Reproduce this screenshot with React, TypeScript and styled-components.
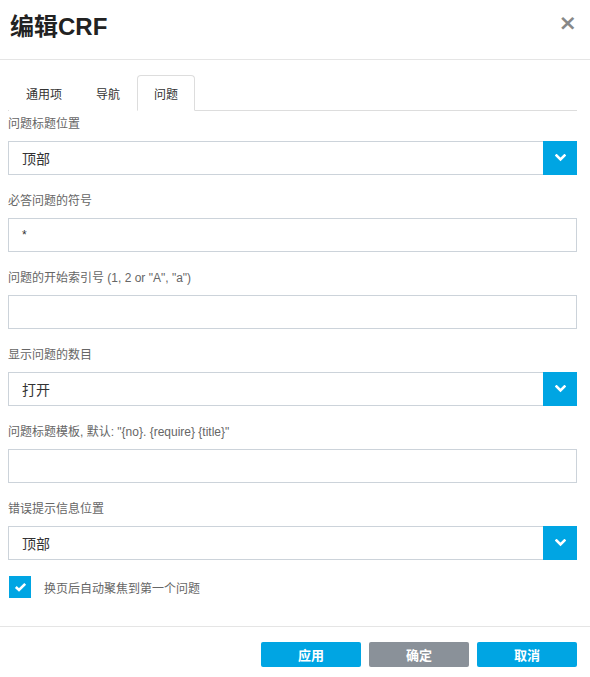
import React from "react";
import styled, { createGlobalStyle } from "styled-components";

const Global = createGlobalStyle`
  html, body { margin: 0; padding: 0; background: #fff; }
  body { font-family: "Helvetica Neue", "Liberation Sans", Arial, "Noto Sans CJK SC", sans-serif; }
  * { box-sizing: border-box; }
`;

const Dialog = styled.div`
  width: 590px;
  height: 677px;
  display: flex;
  flex-direction: column;
  background: #fff;
`;

const Header = styled.div`
  height: 60px;
  border-bottom: 1px solid #e5e5e5;
  display: flex;
  align-items: center;
  justify-content: space-between;
  padding: 0 13px 0 10px;
`;

const Title = styled.h1`
  margin: 0;
  font-size: 24px;
  font-weight: 600;
  color: #222;
  line-height: 1;
  padding-bottom: 6px;
`;

const Close = styled.button`
  border: 0;
  background: none;
  padding: 0;
  color: #888;
  font-size: 22px;
  font-weight: 700;
  line-height: 1;
  cursor: pointer;
  margin-bottom: 14px;
  font-family: "DejaVu Sans", sans-serif;
`;

const Body = styled.div`
  flex: 1;
  padding: 15px 13px 0 8px;
  display: flex;
  flex-direction: column;
`;

const TabBar = styled.div`
  display: flex;
  height: 36px;
  border-bottom: 1px solid #ddd;
  padding-left: 1px;
`;

const Tab = styled.div<{ $active?: boolean }>`
  height: 36px;
  padding: 0 16px;
  display: flex;
  align-items: center;
  justify-content: center;
  font-size: 12px;
  color: #333;
  white-space: nowrap;
  border: 1px solid ${(p) => (p.$active ? "#ddd" : "transparent")};
  border-bottom-color: ${(p) => (p.$active ? "#fff" : "transparent")};
  border-radius: 4px 4px 0 0;
  background: #fff;
  margin-bottom: -1px;
`;

const Field = styled.div`
  display: flex;
  flex-direction: column;
  margin-top: 5px;
  & + & {
    margin-top: 18px;
  }
`;

const Label = styled.label`
  font-size: 12px;
  color: #666;
  line-height: 17px;
  margin-bottom: 8px;
`;

const Box = styled.div`
  height: 34px;
  border: 1px solid #ccd3da;
  display: flex;
  align-items: center;
  background: #fff;
`;

const Value = styled.span<{ $small?: boolean }>`
  flex: 1;
  padding-left: 13px;
  font-size: ${(p) => (p.$small ? "12px" : "14px")};
  color: #333;
`;

const Arrow = styled.span`
  width: 34px;
  height: 34px;
  margin: -1px -1px -1px 0;
  background: #00a5e3;
  display: flex;
  align-items: center;
  justify-content: center;
`;

const CheckRow = styled.div`
  display: flex;
  align-items: center;
  margin-top: 16px;
  padding-left: 1px;
`;

const CheckBox = styled.span`
  width: 22px;
  height: 22px;
  background: #00a5e3;
  display: flex;
  align-items: center;
  justify-content: center;
`;

const CheckLabel = styled.span`
  margin-left: 13px;
  font-size: 12px;
  color: #666;
`;

const Footer = styled.div`
  height: 51px;
  border-top: 1px solid #e5e5e5;
  display: flex;
  justify-content: flex-end;
  align-items: flex-start;
  gap: 8px;
  padding: 15px 13px 0 0;
`;

const Button = styled.button<{ $grey?: boolean }>`
  width: 100px;
  height: 25px;
  border: 0;
  border-radius: 2px;
  background: ${(p) => (p.$grey ? "#8a9199" : "#00a5e3")};
  color: #fff;
  font-size: 13px;
  font-weight: 700;
  font-family: inherit;
  cursor: pointer;
`;

const Chevron = () => (
  <svg width="11" height="8" viewBox="0 0 11 8">
    <path d="M1.5 1.5 L5.5 5.5 L9.5 1.5" fill="none" stroke="#fff" strokeWidth="2.6" strokeLinecap="square" />
  </svg>
);

const Tick = () => (
  <svg width="13" height="10" viewBox="0 0 13 10">
    <path d="M1.8 5 L5 8 L11.2 1.8" fill="none" stroke="#fff" strokeWidth="2.6" />
  </svg>
);

const SelectField = ({ label, value }: { label: string; value: string }) => (
  <Field>
    <Label>{label}</Label>
    <Box>
      <Value>{value}</Value>
      <Arrow>
        <Chevron />
      </Arrow>
    </Box>
  </Field>
);

const InputField = ({ label, value }: { label: string; value?: string }) => (
  <Field>
    <Label>{label}</Label>
    <Box>
      <Value $small>{value}</Value>
    </Box>
  </Field>
);

export default function App() {
  return (
    <>
      <Global />
      <Dialog>
        <Header>
          <Title>编辑CRF</Title>
          <Close>×</Close>
        </Header>
        <Body>
          <TabBar>
            <Tab>通用项</Tab>
            <Tab>导航</Tab>
            <Tab $active>问题</Tab>
          </TabBar>
          <SelectField label="问题标题位置" value="顶部" />
          <InputField label="必答问题的符号" value="*" />
          <InputField label={'问题的开始索引号 (1, 2 or "A", "a")'} />
          <SelectField label="显示问题的数目" value="打开" />
          <InputField label={'问题标题模板, 默认: "{no}. {require} {title}"'} />
          <SelectField label="错误提示信息位置" value="顶部" />
          <CheckRow>
            <CheckBox>
              <Tick />
            </CheckBox>
            <CheckLabel>换页后自动聚焦到第一个问题</CheckLabel>
          </CheckRow>
        </Body>
        <Footer>
          <Button>应用</Button>
          <Button $grey>确定</Button>
          <Button>取消</Button>
        </Footer>
      </Dialog>
    </>
  );
}
